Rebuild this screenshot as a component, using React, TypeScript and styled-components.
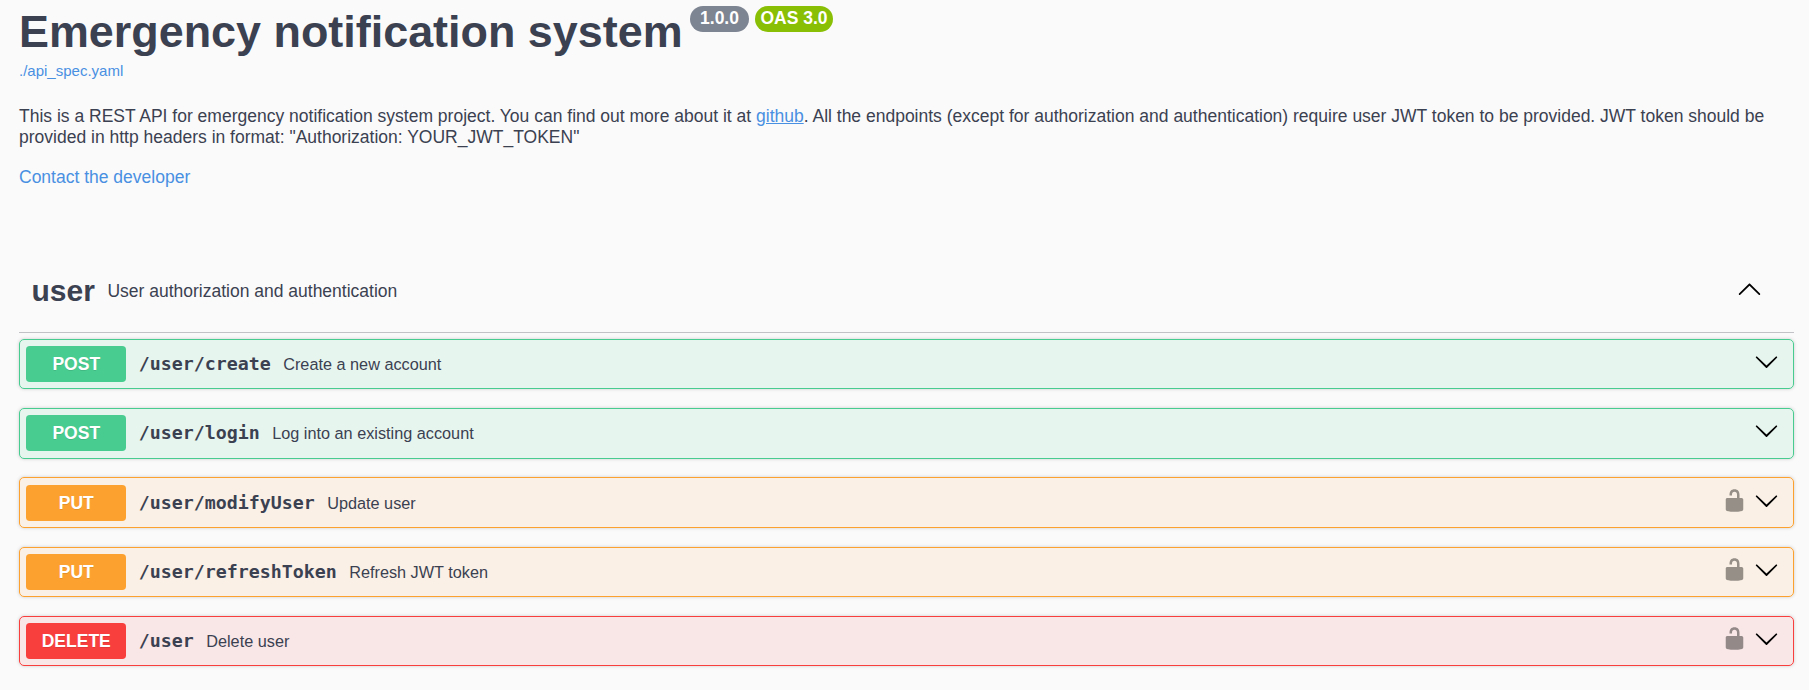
import React from "react";
import styled, { createGlobalStyle } from "styled-components";

const GlobalStyle = createGlobalStyle`
  *, *::before, *::after { box-sizing: border-box; }
  body {
    margin: 0;
    background: #fafafa;
    color: #3b4151;
    font-family: Arial, "Liberation Sans", sans-serif;
  }
`;

const methodColors = {
  POST: { solid: "#49cc90", tint: "rgba(73, 204, 144, 0.1)" },
  PUT: { solid: "#fca130", tint: "rgba(252, 161, 48, 0.1)" },
  DELETE: { solid: "#f93e3e", tint: "rgba(249, 62, 62, 0.1)" },
};

type Method = keyof typeof methodColors;

const Page = styled.main`
  min-height: 690px;
  padding: 6px 15px 0 19px;
`;

const Info = styled.header`
  display: flex;
  flex-direction: column;
  height: 248px;
`;

const TitleRow = styled.div`
  display: flex;
  align-items: flex-start;
  height: 50px;
`;

const Title = styled.h1`
  margin: 0;
  width: 671px;
  font-size: 44.9px;
  line-height: 52px;
  font-weight: 700;
  white-space: nowrap;
`;

const Badge = styled.span<{ $color: string; $width: number }>`
  width: ${(p) => p.$width}px;
  height: 26px;
  margin-right: 6px;
  border-radius: 13px;
  background: ${(p) => p.$color};
  color: #fff;
  font-size: 17.5px;
  line-height: 24px;
  font-weight: 700;
  text-align: center;
  white-space: nowrap;
`;

const Link = styled.a<{ $plain?: boolean }>`
  color: #4990e2;
  text-decoration: ${(p) => (p.$plain ? "none" : "underline")};
`;

const SpecLink = styled(Link)`
  margin-top: 6px;
  font-size: 15px;
  line-height: 18px;
`;

const Description = styled.p`
  margin: 26px 0 0;
  font-size: 17.5px;
  line-height: 21px;
`;

const Contact = styled.div`
  margin-top: 19px;
  font-size: 17.5px;
  line-height: 21px;
`;

const TagHeader = styled.div`
  display: flex;
  align-items: center;
  height: 79px;
  padding: 0 32px 5px 12.5px;
  border-bottom: 1px solid rgba(59, 65, 81, 0.3);
`;

const TagName = styled.h2`
  margin: 0;
  font-size: 30px;
  line-height: 36px;
`;

const TagText = styled.span`
  flex: 1;
  padding: 2px 0 0 12.5px;
  font-size: 17.5px;
  line-height: 21px;
`;

const TagToggle = styled.span`
  padding-bottom: 4px;
`;

const Operations = styled.div`
  display: flex;
  flex-direction: column;
  gap: 18.75px;
  padding-top: 5.8px;
`;

const Operation = styled.div<{ $method: Method }>`
  display: flex;
  align-items: center;
  height: 50.5px;
  padding: 6.25px 14px 6.25px 6.25px;
  border: 1px solid ${(p) => methodColors[p.$method].solid};
  border-radius: 5px;
  background: ${(p) => methodColors[p.$method].tint};
  box-shadow: 0 0 3.75px rgba(0, 0, 0, 0.19);
`;

const MethodLabel = styled.span<{ $method: Method }>`
  width: 100px;
  height: 36px;
  border-radius: 3.75px;
  background: ${(p) => methodColors[p.$method].solid};
  color: #fff;
  font-size: 17.5px;
  line-height: 36px;
  font-weight: 700;
  text-align: center;
  text-shadow: 0 1.25px 0 rgba(0, 0, 0, 0.1);
`;

const Path = styled.span`
  padding: 0 12.5px;
  font-family: Consolas, "DejaVu Sans Mono", monospace;
  font-size: 18.27px;
  line-height: 24px;
  font-weight: 700;
`;

const Summary = styled.span`
  flex: 1;
  font-size: 16.25px;
  line-height: 20px;
`;

const Actions = styled.div`
  display: flex;
  align-items: center;
  gap: 7.5px;
  padding-bottom: 5px;
`;

const Icon = styled.svg<{ $faded?: boolean }>`
  display: block;
  width: 25px;
  height: 25px;
  fill: #000;
  opacity: ${(p) => (p.$faded ? 0.4 : 1)};
`;

const ArrowDown = () => (
  <Icon viewBox="0 0 20 20">
    <path d="M17.418 6.109c.272-.268.709-.268.979 0s.271.701 0 .969l-7.908 7.83c-.27.268-.707.268-.979 0l-7.908-7.83c-.27-.268-.271-.701 0-.969.271-.268.709-.268.979 0L10 13.25z" />
  </Icon>
);

const ArrowUp = () => (
  <Icon viewBox="0 0 20 20">
    <path d="M17.418 14.908c.272.27.709.27.979 0s.271-.701 0-.969l-7.908-7.83c-.27-.268-.707-.268-.979 0l-7.908 7.83c-.27.268-.271.701 0 .969.271.268.709.268.979 0L10 7.767z" />
  </Icon>
);

const Unlocked = () => (
  <Icon viewBox="0 0 20 20" $faded>
    <path d="M15.8 8H14V5.6C14 2.703 12.665 1 10 1 7.334 1 6 2.703 6 5.6V6h2v-.801C8 3.754 8.797 3 10 3c1.203 0 2 .754 2 2.199V8H4c-.553 0-1 .646-1 1.199V17c0 .549.428 1.139.951 1.307l1.197.387C5.672 18.861 6.55 19 7.1 19h5.8c.549 0 1.428-.139 1.951-.307l1.196-.387c.524-.167.953-.757.953-1.306V9.199C17 8.646 16.352 8 15.8 8z" />
  </Icon>
);

const operations: { method: Method; path: string; summary: string; secured?: boolean }[] = [
  { method: "POST", path: "/user/create", summary: "Create a new account" },
  { method: "POST", path: "/user/login", summary: "Log into an existing account" },
  { method: "PUT", path: "/user/modifyUser", summary: "Update user", secured: true },
  { method: "PUT", path: "/user/refreshToken", summary: "Refresh JWT token", secured: true },
  { method: "DELETE", path: "/user", summary: "Delete user", secured: true },
];

export default function App() {
  return (
    <Page>
      <GlobalStyle />
      <Info>
        <TitleRow>
          <Title>Emergency notification system</Title>
          <Badge $color="#7d8492" $width={59}>1.0.0</Badge>
          <Badge $color="#89bf04" $width={78}>OAS 3.0</Badge>
        </TitleRow>
        <SpecLink $plain>./api_spec.yaml</SpecLink>
        <Description>
          This is a REST API for emergency notification system project. You can find out more about it at{" "}
          <Link>github</Link>. All the endpoints (except for authorization and authentication) require user JWT
          token to be provided. JWT token should be provided in http headers in format: "Authorization:
          YOUR_JWT_TOKEN"
        </Description>
        <Contact>
          <Link $plain>Contact the developer</Link>
        </Contact>
      </Info>
      <section>
        <TagHeader>
          <TagName>user</TagName>
          <TagText>User authorization and authentication</TagText>
          <TagToggle>
            <ArrowUp />
          </TagToggle>
        </TagHeader>
        <Operations>
          {operations.map((op) => (
            <Operation key={op.path} $method={op.method}>
              <MethodLabel $method={op.method}>{op.method}</MethodLabel>
              <Path>{op.path}</Path>
              <Summary>{op.summary}</Summary>
              <Actions>
                {op.secured && <Unlocked />}
                <ArrowDown />
              </Actions>
            </Operation>
          ))}
        </Operations>
      </section>
    </Page>
  );
}
